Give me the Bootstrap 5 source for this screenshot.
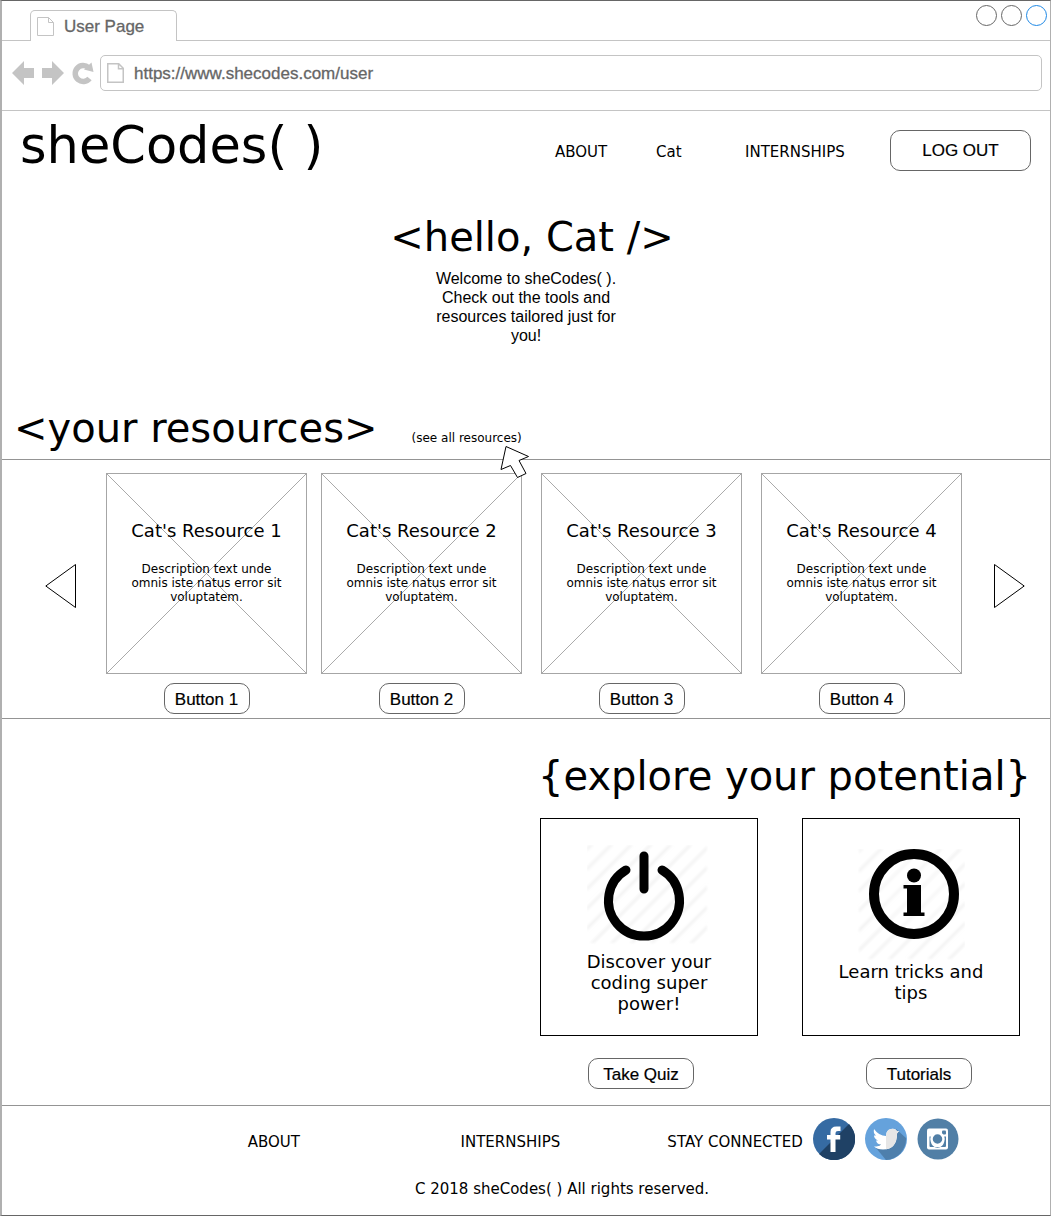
<!DOCTYPE html>
<html lang="en">
<head>
<meta charset="utf-8">
<meta name="viewport" content="width=device-width, initial-scale=1">
<title>User Page</title>
<link href="https://cdn.jsdelivr.net/npm/bootstrap@5.3.0/dist/css/bootstrap.min.css" rel="stylesheet">
<style>
  body { font-family: "DejaVu Sans", sans-serif; font-size: 15px; line-height: 20px; color: #000; background: #fff; }
  a { color: #000; text-decoration: none; }
  svg { display: block; flex: none; }
  .browser { border: 1px solid #666; border-left: 2px solid #b0b0b0; border-right-color: #b0b0b0; }
  .chrome-text { font-family: "Liberation Sans", sans-serif; font-size: 17px; color: #666; -webkit-text-stroke: 0.3px #666; }
  .tab-strip { height: 40px; border-bottom: 1px solid #c4c4c4; padding-left: 28px; padding-right: 3px; }
  .page-tab { width: 147px; height: 31px; margin-bottom: -1px; padding: 1px 0 0 6px; gap: 10px; border: 1px solid #c4c4c4; border-bottom: 0; border-radius: 5px 5px 0 0; background: #fff; }
  .window-dots { gap: 4px; margin-top: 4px; }
  .toolbar { height: 70px; padding: 0 8px 5px 10px; border-bottom: 1px solid #c4c4c4; gap: 6px; }
  .nav-icons { gap: 8px; }
  .address { height: 36px; border: 1px solid #c4c4c4; border-radius: 5px; padding-left: 6px; gap: 10px; }
  .address input { border: 0; outline: 0; padding: 2px 0 0; background: none; min-width: 0; }
  .site-header { min-height: 80px; padding: 0 19px 0 18px; }
  .logo { font-size: 51px; line-height: 60px; padding-bottom: 10px; }
  .main-nav { display: grid; grid-template-columns: 101px 89px 145px auto; align-items: center; margin-bottom: 2px; }
  .main-nav a { padding-top: 4px; }
  .pill { font-family: "Liberation Sans", sans-serif; font-size: 17px; line-height: 20px; color: #000; background: #fff; border: 1px solid #666; border-radius: 10px; height: 31px; padding: 2px 0 0; -webkit-text-stroke: 0.2px #000; }
  .pill-sm { width: 86px; }
  .pill-md { width: 106px; }
  .pill-lg { width: 141px; height: 41px; }
  .title-lg { font-size: 40px; line-height: 48px; font-weight: 400; margin: 0; }
  .hero { padding: 22px 0 59px; }
  .hero .title-lg { padding-left: 12px; }
  .hero p { font-family: "Liberation Sans", sans-serif; font-size: 16px; line-height: 19px; width: 190px; margin: 8px auto 0; }
  .res-head { padding: 0 12px 7px; gap: 34px; border-bottom: 1px solid #949494; }
  .see-all { font-size: 12px; line-height: 14px; }
  .pointer { position: absolute; left: 87px; top: 14px; z-index: 2; }
  .res-strip { padding: 13px 25px 4px 43px; border-bottom: 1px solid #949494; }
  .arrow-btn { border: 0; background: none; padding: 0; margin-top: 90px; }
  .res-grid { display: grid; grid-template-columns: 215fr 220fr 220fr 201fr; flex: 0 1 856px; margin-right: 2px; }
  .res-item { width: 201px; gap: 9px; }
  .res-card { width: 201px; height: 201px; border: 1px solid #a6a6a6; padding: 46px 22px 0; }
  .res-card svg { position: absolute; inset: 0; width: 100%; height: 100%; }
  .res-card h3, .res-card p { position: relative; margin: 0; }
  .res-card h3, .tile-text { font-size: 18px; line-height: 21px; font-weight: 400; }
  .res-card p { font-size: 12px; line-height: 14px; margin-top: 21px; }
  .explore { padding: 33px 19px 16px; border-bottom: 1px solid #949494; }
  .tiles { gap: 44px; margin: 18px 11px 22px; }
  .tile { width: 218px; height: 218px; border: 1px solid #000; padding: 26px 28px 0; }
  .tile-info { padding-top: 30px; }
  .tile-text { margin: 6px 0 0; }
  .tile-info .tile-text { margin-top: 0; }
  .tile-actions { width: 384px; margin-right: 59px; }
  .foot { padding: 12px 0 16px; }
  .foot-links { display: grid; grid-template-columns: 246fr 213fr 207fr 383fr; margin-bottom: 19px; }
  .foot-label { padding-top: 6px; }
  .social { gap: 10px; margin-left: 10px; }
</style>
</head>
<body>
<div class="browser">
  <div class="tab-strip d-flex justify-content-between align-items-end">
    <div class="page-tab d-flex align-items-center chrome-text">
      <svg width="17" height="19" viewBox="0 0 17 19" fill="none" stroke="#c4c4c4"><path d="M.5.5h11l5 5v13H.5zM11.500.5v5h5"/></svg>
      <span>User Page</span>
    </div>
    <div class="window-dots d-flex align-self-start">
      <svg width="21" height="21"><circle cx="10.500" cy="10.500" r="10" fill="none" stroke="#666"/></svg>
      <svg width="21" height="21"><circle cx="10.500" cy="10.500" r="10" fill="none" stroke="#666"/></svg>
      <svg width="21" height="21"><circle cx="10.500" cy="10.500" r="10" fill="none" stroke="#1e88e5"/></svg>
    </div>
  </div>
  <div class="toolbar d-flex align-items-center">
    <div class="nav-icons d-flex align-items-center">
      <svg width="22" height="24" viewBox="0 0 22 24" fill="#c4c4c4"><path d="M0 12 12 0v7h10v10H12v7z"/></svg>
      <svg width="22" height="24" viewBox="0 0 22 24" fill="#c4c4c4"><path d="M22 12 10 0v7H0v10h10v7z"/></svg>
      <svg width="22" height="24" viewBox="0 0 22 24"><path d="M17.500 17.500A8 8 0 1 1 16.500 6.500" fill="none" stroke="#c4c4c4" stroke-width="5.500"/><path d="M19.500 1.500 21.500 11 12 8.500z" fill="#c4c4c4"/></svg>
    </div>
    <div class="address d-flex align-items-center flex-grow-1">
      <svg width="17" height="20" viewBox="0 0 17 20" fill="none" stroke="#c4c4c4" stroke-width="1.500"><path d="M.75.75h11l4.500 4.500v14H.75zM11.500.75v5h5"/></svg>
      <input class="chrome-text flex-grow-1" type="text" aria-label="Address" value="https://www.shecodes.com/user">
    </div>
  </div>

  <header class="site-header d-flex align-items-center justify-content-between">
    <a class="logo text-nowrap" href="#">sheCodes( )</a>
    <nav class="main-nav">
      <a href="#">ABOUT</a>
      <a href="#">Cat</a>
      <a href="#">INTERNSHIPS</a>
      <button class="pill pill-lg" type="button">LOG OUT</button>
    </nav>
  </header>

  <main>
    <section class="hero text-center">
      <h1 class="title-lg">&lt;hello, Cat /&gt;</h1>
      <p>Welcome to sheCodes( ). Check out the tools and resources tailored just for you!</p>
    </section>

    <section>
      <div class="res-head d-flex align-items-baseline">
        <h2 class="title-lg">&lt;your resources&gt;</h2>
        <div class="see-all position-relative">
          <a href="#">(see all resources)</a>
          <svg class="pointer" width="31" height="34" viewBox="0 0 31 34"><path d="M7 1.500 29.500 11.500 20 15.500 27 28.500 18.500 32.500 11.500 20.500 2 24.500z" fill="#fff" stroke="#000"/></svg>
        </div>
      </div>
      <div class="res-strip d-flex justify-content-between align-items-start">
        <button class="arrow-btn" type="button" aria-label="Previous"><svg width="32" height="46" viewBox="0 0 32 46"><path d="M.8 23 30.500 1.500v43z" fill="#fff" stroke="#000"/></svg></button>
        <div class="res-grid">
          <div class="res-item d-flex flex-column align-items-center">
            <article class="res-card position-relative text-center">
              <svg viewBox="0 0 199 199" stroke="#949494" stroke-width=".8"><path d="M0 0 199 199M199 0 0 199"/></svg>
              <h3>Cat's Resource 1</h3>
              <p>Description text unde omnis iste natus error sit voluptatem.</p>
            </article>
            <button class="pill pill-sm" type="button">Button 1</button>
          </div>
          <div class="res-item d-flex flex-column align-items-center">
            <article class="res-card position-relative text-center">
              <svg viewBox="0 0 199 199" stroke="#949494" stroke-width=".8"><path d="M0 0 199 199M199 0 0 199"/></svg>
              <h3>Cat's Resource 2</h3>
              <p>Description text unde omnis iste natus error sit voluptatem.</p>
            </article>
            <button class="pill pill-sm" type="button">Button 2</button>
          </div>
          <div class="res-item d-flex flex-column align-items-center">
            <article class="res-card position-relative text-center">
              <svg viewBox="0 0 199 199" stroke="#949494" stroke-width=".8"><path d="M0 0 199 199M199 0 0 199"/></svg>
              <h3>Cat's Resource 3</h3>
              <p>Description text unde omnis iste natus error sit voluptatem.</p>
            </article>
            <button class="pill pill-sm" type="button">Button 3</button>
          </div>
          <div class="res-item d-flex flex-column align-items-center">
            <article class="res-card position-relative text-center">
              <svg viewBox="0 0 199 199" stroke="#949494" stroke-width=".8"><path d="M0 0 199 199M199 0 0 199"/></svg>
              <h3>Cat's Resource 4</h3>
              <p>Description text unde omnis iste natus error sit voluptatem.</p>
            </article>
            <button class="pill pill-sm" type="button">Button 4</button>
          </div>
        </div>
        <button class="arrow-btn" type="button" aria-label="Next"><svg width="32" height="46" viewBox="0 0 32 46"><path d="M31.200 23 1.500 1.500v43z" fill="#fff" stroke="#000"/></svg></button>
      </div>
    </section>

    <section class="explore d-flex flex-column align-items-end">
      <h2 class="title-lg text-nowrap">{explore your potential}</h2>
      <div class="tiles d-flex">
        <div class="tile d-flex flex-column align-items-center text-center">
          <svg width="124" height="100" viewBox="0 0 124 100">
            <defs>
              <pattern id="hatch" width="14" height="14" patternUnits="userSpaceOnUse" patternTransform="rotate(45)"><path d="M3 0v14" stroke="#f3f3f3" stroke-width="3"/></pattern>
              <filter id="soft"><feGaussianBlur stdDeviation="1"/></filter>
            </defs>
            <rect width="120" height="98" fill="url(#hatch)" filter="url(#soft)"/>
            <g fill="none" stroke="#000" stroke-width="9" stroke-linecap="round"><path d="M39 25A35.500 35.500 0 1 0 75 25M57 11v33"/></g>
          </svg>
          <p class="tile-text">Discover your coding super power!</p>
        </div>
        <div class="tile tile-info d-flex flex-column align-items-center text-center">
          <svg width="108" height="112" viewBox="0 0 108 112">
            <rect x="2" width="106" height="110" fill="url(#hatch)" filter="url(#soft)"/>
            <circle cx="57" cy="45" r="40" fill="#fff" fill-opacity=".3" stroke="#000" stroke-width="10"/>
            <circle cx="57" cy="26.500" r="7"/>
            <path d="M46.500 36H64v27.500h3.500V67h-21v-3.500H50v-24h-3.500z"/>
          </svg>
          <p class="tile-text">Learn tricks and tips</p>
        </div>
      </div>
      <div class="tile-actions d-flex justify-content-between">
        <button class="pill pill-md" type="button">Take Quiz</button>
        <button class="pill pill-md" type="button">Tutorials</button>
      </div>
    </section>
  </main>

  <footer class="foot">
    <div class="foot-links align-items-center">
      <span></span>
      <a class="foot-label" href="#">ABOUT</a>
      <a class="foot-label" href="#">INTERNSHIPS</a>
      <div class="d-flex align-items-center">
        <span class="foot-label text-nowrap">STAY CONNECTED</span>
        <div class="social d-flex align-items-center">
          <a href="#" aria-label="Facebook"><svg width="42" height="42" viewBox="0 0 42 42"><circle cx="21" cy="21" r="21" fill="#366ba3"/><path d="M6 36A21 21 0 0 0 36 6z" fill="#1f4165"/><path d="M17.500 34V21.500H14V17h3.500v-3q0-5.500 6-5.500h4V13h-2.500q-2.500 0-2.500 2v2h4.700v4.500h-4.700V34z" fill="#fff"/></svg></a>
          <a href="#" aria-label="Twitter"><svg width="42" height="42" viewBox="0 0 42 42"><circle cx="21" cy="21" r="21" fill="#65a2dc"/><path d="M31 11 41 20A21 21 0 0 1 21 42L11 30z" fill="#4e7fac"/><path d="M9 11q5 7 12 7 0-6 5-7 4-1 6 2h2l-2 2.500q0 16-14 16-6 0-9-3 5 0 7-2-4 0-5-4h2q-4-2-4-5h2q-3-2-2-6.500z" fill="#fff"/><path d="M21 18q0-6 5-7 4-1 6 2h2l-2 2.500q0 14-11 15.800z" fill="#e6e6e6"/></svg></a>
          <a href="#" aria-label="Instagram"><svg width="42" height="42" viewBox="0 0 42 42"><circle cx="21" cy="21" r="20.500" fill="#517fa6"/><rect x="10" y="10.500" width="21" height="21" rx="2" fill="#fff"/><path d="M12.500 18.500h3.500a6.500 6.500 0 1 0 9 0h4v9.500q0 1-1 1H13.500q-1 0-1-1z" fill="#517fa6"/><rect x="25" y="12.500" width="4" height="4" rx="1" fill="#517fa6"/><circle cx="20.500" cy="21" r="6" fill="#517fa6" stroke="#fff" stroke-width="2.500"/></svg></a>
        </div>
      </div>
    </div>
    <div class="text-center ps-5">
      <div class="ps-4">C 2018 sheCodes( ) All rights reserved.</div>
    </div>
  </footer>
</div>
<script src="https://cdn.jsdelivr.net/npm/bootstrap@5.3.0/dist/js/bootstrap.bundle.min.js"></script>
</body>
</html>
